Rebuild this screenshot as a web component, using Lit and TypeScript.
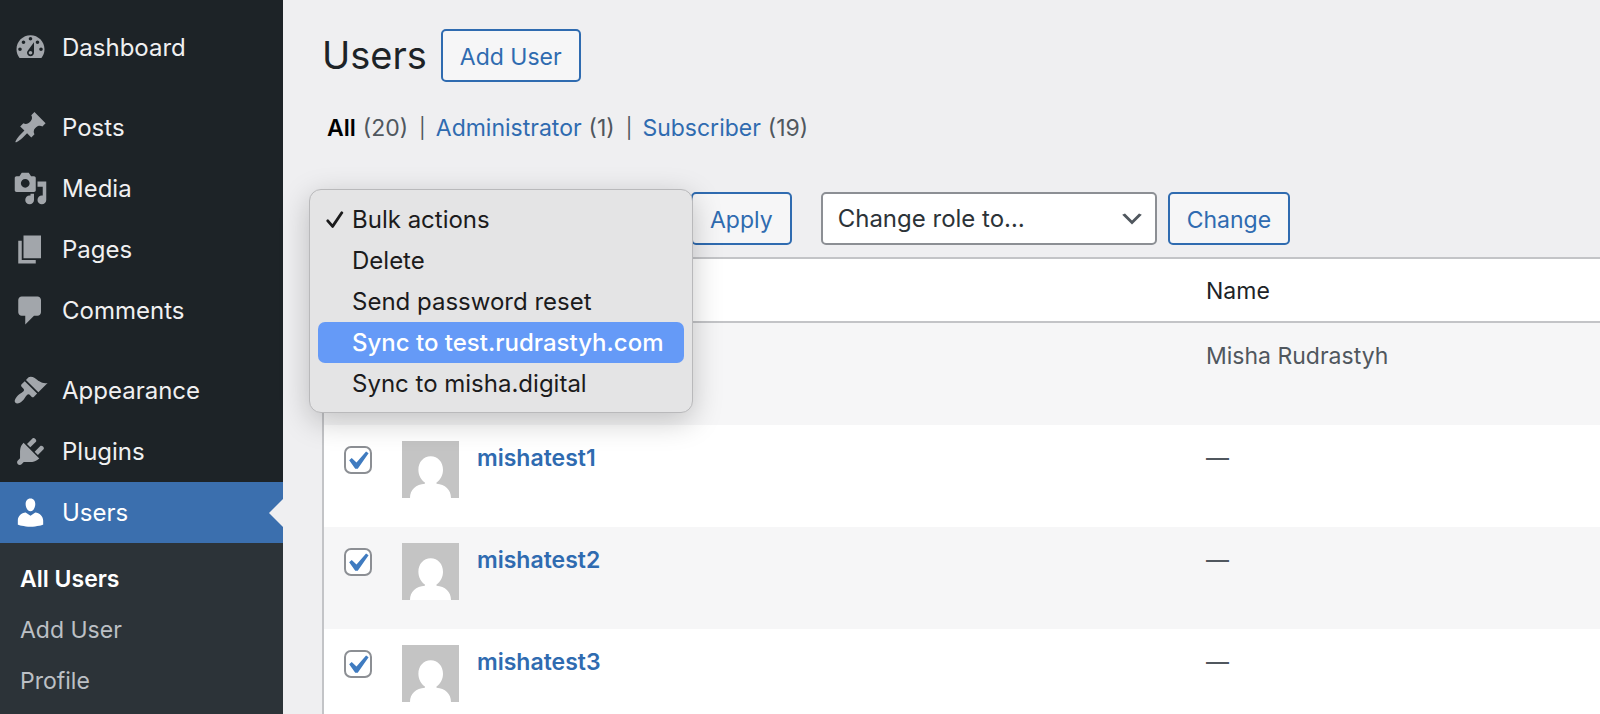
import { LitElement, html, css, svg, nothing } from "lit";
import { customElement, property, state } from "lit/decorators.js";
import { classMap } from "lit/directives/class-map.js";

const ICONS: Record<string, string> = {
  dashboard:
    "M3.76 16h12.48c1.1-1.37 1.76-3.11 1.76-5 0-4.42-3.58-8-8-8s-8 3.58-8 8c0 1.89.66 3.63 1.76 5zM10 4c.55 0 1 .45 1 1s-.45 1-1 1-1-.45-1-1 .45-1 1-1zM6 6c.55 0 1 .45 1 1s-.45 1-1 1-1-.45-1-1 .45-1 1-1zm8 0c.55 0 1 .45 1 1s-.45 1-1 1-1-.45-1-1 .45-1 1-1zm-5.37 5.55L12 7v6c0 1.1-.9 2-2 2s-2-.9-2-2c0-.57.24-1.08.63-1.45zM4 10c.55 0 1 .45 1 1s-.45 1-1 1-1-.45-1-1 .45-1 1-1zm12 0c.55 0 1 .45 1 1s-.45 1-1 1-1-.45-1-1 .45-1 1-1zm-5 3c0-.55-.45-1-1-1s-1 .45-1 1 .45 1 1 1 1-.45 1-1z",
  posts:
    "M10.44 3.02l1.82-1.82 6.36 6.35-1.83 1.82c-1.05-.68-2.48-.57-3.41.36l-.75.75c-.92.93-1.04 2.35-.35 3.41l-1.83 1.82-2.41-2.41-2.8 2.79c-.42.42-3.38 2.71-3.8 2.29s1.86-3.39 2.28-3.81l2.79-2.79L4.1 9.36l1.83-1.82c1.05.69 2.48.57 3.4-.36l.75-.75c.93-.92 1.05-2.35.36-3.41z",
  media:
    "M13 11V4c0-.55-.45-1-1-1h-1.67L9 1H5L3.67 3H2c-.55 0-1 .45-1 1v7c0 .55.45 1 1 1h10c.55 0 1-.45 1-1zM7 4.5c1.38 0 2.5 1.12 2.5 2.5S8.38 9.5 7 9.5 4.5 8.38 4.5 7 5.62 4.5 7 4.5zM14 6h5v10.5c0 1.38-1.12 2.5-2.5 2.5S14 17.88 14 16.5s1.12-2.5 2.5-2.5c.17 0 .34.02.5.05V9h-3V6zm-4 8.05V13h2v3.5c0 1.38-1.12 2.5-2.5 2.5S7 17.88 7 16.5 8.12 14 9.5 14c.17 0 .34.02.5.05z",
  pages: "M6 15V2h10v13H6zm-1 1h8v2H3V5h2v11z",
  comments:
    "M5 2h9c1.1 0 2 .9 2 2v7c0 1.1-.9 2-2 2h-2l-5 5v-5H5c-1.1 0-2-.9-2-2V4c0-1.1.9-2 2-2z",
  appearance:
    "M14.48 11.06L7.41 3.99l1.5-1.5c.5-.56 2.3-.47 3.51.32 1.21.8 1.43 1.28 2.91 2.1 1.18.64 2.45 1.26 4.45.85zm-.71.71L6.7 4.7 4.93 6.47c-.39.39-.39 1.02 0 1.41l1.06 1.06c.39.39.39 1.03 0 1.42-.6.6-1.43 1.11-2.21 1.69-.35.26-.7.53-1.01.84C1.43 14.23.4 16.08 1.4 17.07c.99 1 2.84-.03 4.18-1.36.31-.31.58-.66.85-1.02.57-.78 1.08-1.61 1.69-2.21.39-.39 1.02-.39 1.41 0l1.06 1.06c.39.39 1.02.39 1.41 0z",
  plugins:
    "M13.11 4.36L9.87 7.6 8 5.73l3.24-3.24c.35-.34 1.05-.2 1.56.32.52.51.66 1.21.31 1.55zm-8 1.77l.91-1.12 9.01 9.01-1.19.84c-.71.71-2.63 1.16-3.82 1.16H6.14L4.9 17.26c-.59.59-1.54.59-2.12 0-.59-.58-.59-1.53 0-2.12l1.24-1.24v-3.88c0-1.13.4-3.19 1.09-3.89zm7.26 3.97l3.24-3.24c.34-.35 1.04-.21 1.55.31.52.51.66 1.21.31 1.55l-3.24 3.25z",
  users:
    "M10 9.25c-2.27 0-2.73-3.44-2.73-3.44C7 4.02 7.82 2 9.97 2c2.16 0 2.98 2.02 2.71 3.81 0 0-.41 3.44-2.68 3.44zm0 2.57L12.72 10c2.39 0 4.52 2.33 4.52 4.53v2.49s-3.65 1.13-7.24 1.13c-3.65 0-7.24-1.13-7.24-1.13v-2.49c0-2.25 1.94-4.48 4.47-4.48z",
  chevron: "M5 6l5 5 5-5 2 1-7 7-7-7 2-1z",
  check: "M14.83 4.89l1.34.94-5.81 8.38H9.02L5.78 9.67l1.34-1.25 2.57 2.4z",
};

const glyph = (name: string, cls = "icon", viewBox = "0 0 20 20") => html`
  <svg class=${cls} viewBox=${viewBox} aria-hidden="true">
    ${svg`<path fill="currentColor" d=${ICONS[name]}></path>`}
  </svg>
`;

const FONT = css`"Inter", "Liberation Sans", sans-serif`;

@customElement("admin-menu")
export class AdminMenu extends LitElement {
  static styles = css`
    :host {
      display: block;
      background: #1d2327;
      padding-top: 17px;
      font-family: ${FONT};
    }
    ul {
      list-style: none;
      margin: 0;
      padding: 0;
    }
    a {
      text-decoration: none;
      color: inherit;
    }
    .item {
      display: flex;
      align-items: center;
      gap: 14px;
      height: 61px;
      padding-left: 13px;
      font-size: 24px;
      line-height: 32px;
      color: #f0f0f1;
    }
    .group {
      margin-top: 19px;
    }
    .icon {
      width: 35px;
      height: 35px;
      flex: none;
      color: #a2a6ab;
    }
    .current {
      background: #3b6fae;
      color: #fff;
      position: relative;
    }
    .current .icon {
      color: #fff;
    }
    .current::after {
      content: "";
      position: absolute;
      right: 0;
      top: 50%;
      margin-top: -14px;
      border: 14px solid transparent;
      border-left: 0;
      border-right-color: #efeff1;
    }
    .sub {
      background: #2c3338;
      padding: 11px 0;
      font-size: 23px;
      line-height: 51px;
      color: #bcc0c5;
    }
    .sub a {
      display: block;
      padding-left: 20px;
    }
    .sub .on {
      color: #fff;
      font-weight: 600;
    }
  `;

  private items = [
    { id: "dashboard", label: "Dashboard" },
    { id: "posts", label: "Posts", group: true },
    { id: "media", label: "Media" },
    { id: "pages", label: "Pages" },
    { id: "comments", label: "Comments" },
    { id: "appearance", label: "Appearance", group: true },
    { id: "plugins", label: "Plugins" },
    { id: "users", label: "Users", sub: ["All Users", "Add User", "Profile"] },
  ];

  render() {
    return html`<nav>
      <ul>
        ${this.items.map(
          (item) => html`<li class=${classMap({ group: !!item.group })}>
            <a class=${classMap({ item: true, current: !!item.sub })} href="#${item.id}">
              ${glyph(item.id)}<span>${item.label}</span>
            </a>
            ${item.sub
              ? html`<ul class="sub">
                  ${item.sub.map(
                    (label, i) =>
                      html`<li><a class=${classMap({ on: i === 0 })} href="#users">${label}</a></li>`
                  )}
                </ul>`
              : nothing}
          </li>`
        )}
      </ul>
    </nav>`;
  }
}

@customElement("action-menu")
export class ActionMenu extends LitElement {
  @property({ attribute: false }) options: string[] = [];
  @property({ type: Number }) selected = 0;
  @property({ type: Number }) active = -1;

  static styles = css`
    :host {
      display: block;
      box-sizing: border-box;
      padding: 9px 8px 8px;
      border: 1px solid #b9b9bb;
      border-radius: 12px;
      background: #e4e4e5;
      box-shadow: 0 8px 30px rgba(0, 0, 0, 0.22);
      font-family: ${FONT};
    }
    .option {
      display: grid;
      grid-template-columns: 26px auto;
      align-items: center;
      width: 100%;
      height: 41px;
      padding: 0 8px;
      border: 0;
      border-radius: 7px;
      background: none;
      color: #1b1b1c;
      font: 400 24px/32px ${FONT};
      text-align: left;
      white-space: nowrap;
    }
    .active {
      background: #659af7;
      color: #fff;
      font-weight: 500;
    }
    .tick {
      width: 18px;
      height: 18px;
    }
  `;

  render() {
    return html`<div role="listbox" aria-label="Bulk actions">
      ${this.options.map(
        (label, i) => html`<button
          class=${classMap({ option: true, active: i === this.active })}
          role="option"
          aria-selected=${i === this.selected}
        >
          <span
            >${i === this.selected
              ? html`<svg class="tick" viewBox="0 0 18 18" aria-hidden="true">
                  <path
                    d="M1.8 10.8 6.6 16.4 15.8 2.8"
                    fill="none"
                    stroke="currentColor"
                    stroke-width="2.8"
                    stroke-linecap="round"
                    stroke-linejoin="round"
                  />
                </svg>`
              : nothing}</span
          >
          <span>${label}</span>
        </button>`
      )}
    </div>`;
  }
}

interface User {
  login?: string;
  name: string;
}

@customElement("app-root")
export class AppRoot extends LitElement {
  static styles = css`
    :host {
      display: grid;
      grid-template-columns: 283px minmax(0, 1fr);
      height: 100vh;
      overflow: hidden;
      background: #efeff1;
      color: #50575e;
      font: 400 23px/34px ${FONT};
    }
    main {
      padding: 29px 0 0 39px;
      min-width: 0;
    }
    a {
      color: #2f6bb0;
      text-decoration: none;
    }
    header {
      display: flex;
      align-items: center;
      gap: 14px;
    }
    h1 {
      margin: 0;
      font-size: 38px;
      line-height: 53px;
      font-weight: 400;
      color: #1d2327;
    }
    .button {
      box-sizing: border-box;
      height: 53px;
      padding: 2px 17px 0;
      border: 2px solid #2f6bb0;
      border-radius: 5px;
      background: #f6f6f7;
      color: #2f6bb0;
      font: 400 23px/32px ${FONT};
    }
    .filters {
      display: flex;
      gap: 11px;
      margin: 29px 0 47px;
      padding: 0 0 0 5px;
      list-style: none;
    }
    .filters li {
      display: flex;
      gap: 7px;
    }
    .filters li + li::before {
      content: "|";
      margin-right: 3px;
      font-size: 20px;
    }
    .filters .on {
      color: #000;
      font-weight: 600;
    }
    .toolbar {
      display: flex;
      align-items: center;
      gap: 11px;
      position: relative;
      margin-bottom: 12px;
    }
    .apply {
      margin-right: 18px;
    }
    .select {
      display: grid;
      align-items: center;
      width: 336px;
    }
    .bulk {
      width: 358px;
    }
    .select select,
    .select .chevron {
      grid-area: 1 / 1;
    }
    select {
      appearance: none;
      box-sizing: border-box;
      width: 100%;
      height: 53px;
      padding: 0 44px 0 15px;
      border: 2px solid #8c8f94;
      border-radius: 5px;
      background: #fff;
      color: #2c3338;
      font: 400 24px/32px ${FONT};
    }
    .chevron {
      justify-self: end;
      width: 28px;
      height: 28px;
      margin-right: 11px;
      color: #50575e;
      pointer-events: none;
    }
    .popup {
      position: absolute;
      z-index: 1;
      left: -13px;
      top: -3px;
      width: 384px;
    }
    table {
      width: 100%;
      table-layout: fixed;
      border-collapse: separate;
      border-spacing: 0;
      border: 2px solid #c3c4c7;
      border-right: 0;
      background: #fff;
      box-sizing: border-box;
    }
    .col-check {
      width: 64px;
    }
    .col-name {
      width: 412px;
    }
    th {
      height: 64px;
      padding: 2px 18px 0;
      border-bottom: 2px solid #c3c4c7;
      box-sizing: border-box;
      text-align: left;
      font-weight: 400;
      color: #1d2327;
    }
    td {
      height: 102px;
      padding: 16px 18px 0 14px;
      box-sizing: border-box;
      vertical-align: top;
    }
    td:last-child {
      padding-left: 18px;
    }
    tbody tr:nth-child(odd) {
      background: #f6f6f7;
    }
    .check {
      padding: 21px 0 0 20px;
    }
    th.check {
      padding-top: 0;
    }
    .box {
      display: grid;
      width: 28px;
      height: 28px;
    }
    .box input,
    .box svg {
      grid-area: 1 / 1;
      width: 28px;
      height: 28px;
      margin: 0;
    }
    .box input {
      appearance: none;
      box-sizing: border-box;
      border: 2px solid #8c8f94;
      border-radius: 7px;
      background: #fff;
    }
    .box svg {
      visibility: hidden;
      color: #3f7bc0;
      pointer-events: none;
    }
    .box input:checked + svg {
      visibility: visible;
    }
    .user {
      display: flex;
      gap: 18px;
      font-weight: 600;
    }
    .avatar {
      width: 57px;
      height: 57px;
      flex: none;
    }
  `;

  @state() private actions = [
    "Bulk actions",
    "Delete",
    "Send password reset",
    "Sync to test.rudrastyh.com",
    "Sync to misha.digital",
  ];

  @state() private users: User[] = [
    { name: "Misha Rudrastyh" },
    { login: "mishatest1", name: "—" },
    { login: "mishatest2", name: "—" },
    { login: "mishatest3", name: "—" },
  ];

  private checkbox(label: string, checked: boolean) {
    return html`<label class="box">
      <input type="checkbox" aria-label=${label} .checked=${checked} />
      ${glyph("check", "mark", "3 2 15 15")}
    </label>`;
  }

  private row(user: User) {
    return html`<tr>
      <td class="check">${this.checkbox(`Select ${user.login ?? user.name}`, !!user.login)}</td>
      <td>
        <div class="user">
          <svg class="avatar" viewBox="0 0 57 57" aria-hidden="true">
            <rect width="57" height="57" fill="#c4c4c4" />
            <path
              fill="#fff"
              d="M28.7 15.2c7.2 0 12.3 5.8 12.3 13.6 0 5.5-2.7 10.2-6.5 12.8v1.1C43 43.4 49 48.5 49 57H8c0-8.5 6-13.6 14.9-14.3v-1.1c-3.8-2.6-6.5-7.3-6.5-12.8 0-7.8 5.1-13.6 12.3-13.6z"
            />
          </svg>
          ${user.login ? html`<a href="#user">${user.login}</a>` : nothing}
        </div>
      </td>
      <td>${user.name}</td>
    </tr>`;
  }

  render() {
    return html`
      <admin-menu></admin-menu>
      <main>
        <header>
          <h1>Users</h1>
          <button class="button">Add User</button>
        </header>
        <ul class="filters">
          <li><a class="on" href="#all">All</a><span>(20)</span></li>
          <li><a href="#administrator">Administrator</a><span>(1)</span></li>
          <li><a href="#subscriber">Subscriber</a><span>(19)</span></li>
        </ul>
        <div class="toolbar">
          <div class="select bulk">
            <select aria-label="Bulk actions">
              ${this.actions.map((a) => html`<option>${a}</option>`)}
            </select>
            ${glyph("chevron", "chevron")}
          </div>
          <button class="button apply">Apply</button>
          <div class="select">
            <select aria-label="Change role to…">
              <option>Change role to…</option>
            </select>
            ${glyph("chevron", "chevron")}
          </div>
          <button class="button">Change</button>
          <action-menu class="popup" .options=${this.actions} .selected=${0} .active=${3}></action-menu>
        </div>
        <table>
          <colgroup>
            <col class="col-check" />
            <col />
            <col class="col-name" />
          </colgroup>
          <thead>
            <tr>
              <th class="check">${this.checkbox("Select all", false)}</th>
              <th></th>
              <th>Name</th>
            </tr>
          </thead>
          <tbody>
            ${this.users.map((u) => this.row(u))}
          </tbody>
        </table>
      </main>
    `;
  }
}
